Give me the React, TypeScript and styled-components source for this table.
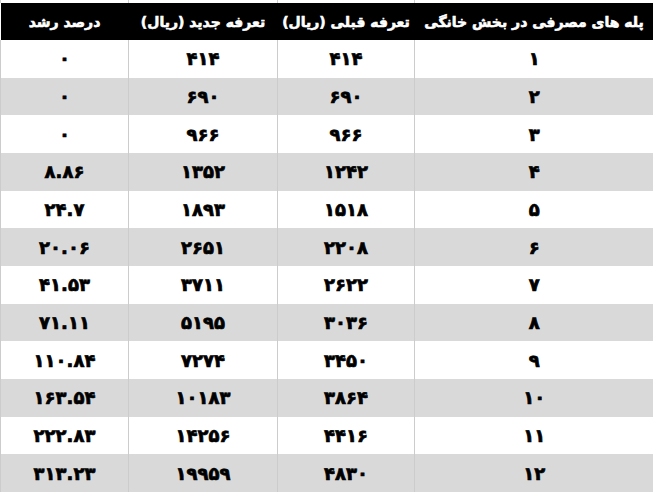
import React from "react";
import styled, { createGlobalStyle } from "styled-components";

const GlobalStyle = createGlobalStyle`
    html, body {
        margin: 0;
        padding: 0;
        background: #ffffff;
    }
    body {
        font-family: "DejaVu Sans", "Noto Sans", sans-serif;
    }
`;

const Table = styled.table`
    width: 653px;
    border-collapse: collapse;
    table-layout: fixed;
    direction: rtl;
    font-family: "DejaVu Sans", "Noto Sans", sans-serif;
    font-weight: bold;
`;

const Strip = styled.tr`
    height: 3px;
    background: #ffffff;
`;

const StripCell = styled.td`
    padding: 0;
    border-left: 1px solid #cfcfcf;
`;

const HeadRow = styled.tr`
    height: 37px;
    background: #000000;
`;

// the original face is a heavy display font, so thicken DejaVu with a stroke
const HeadCell = styled.th`
    padding: 0;
    color: #ffffff;
    font-size: 14px;
    font-weight: bold;
    text-align: center;
    white-space: nowrap;
    overflow: hidden;
    -webkit-text-stroke: 0.6px #ffffff;
`;

const Row = styled.tr<{ $shaded: boolean }>`
    height: 37.67px;
    background: ${(p) => (p.$shaded ? "#d9d9d9" : "#ffffff")};
`;

const Cell = styled.td`
    padding: 0;
    color: #000000;
    font-size: 18px;
    text-align: center;
    border-left: 1px solid #cccccc;
    -webkit-text-stroke: 0.7px #000000;
`;

const widths = [239, 137, 149, 128];

const headers = [
    "پله های مصرفی در بخش خانگی",
    "تعرفه قبلی (ریال)",
    "تعرفه جدید (ریال)",
    "درصد رشد",
];

const rows: string[][] = [
    ["۱", "۴۱۴", "۴۱۴", "۰"],
    ["۲", "۶۹۰", "۶۹۰", "۰"],
    ["۳", "۹۶۶", "۹۶۶", "۰"],
    ["۴", "۱۲۴۲", "۱۳۵۲", "۸.۸۶"],
    ["۵", "۱۵۱۸", "۱۸۹۳", "۲۴.۷"],
    ["۶", "۲۲۰۸", "۲۶۵۱", "۲۰.۰۶"],
    ["۷", "۲۶۲۲", "۳۷۱۱", "۴۱.۵۳"],
    ["۸", "۳۰۳۶", "۵۱۹۵", "۷۱.۱۱"],
    ["۹", "۳۴۵۰", "۷۲۷۴", "۱۱۰.۸۴"],
    ["۱۰", "۳۸۶۴", "۱۰۱۸۳", "۱۶۳.۵۴"],
    ["۱۱", "۴۴۱۶", "۱۴۲۵۶", "۲۲۲.۸۳"],
    ["۱۲", "۴۸۳۰", "۱۹۹۵۹", "۳۱۳.۲۳"],
];

export default function App() {
    return (
        <>
            <GlobalStyle />
            <Table>
                <colgroup>
                    {widths.map((w, i) => (
                        <col key={i} style={{ width: w }} />
                    ))}
                </colgroup>
                <tbody>
                    <Strip>
                        {widths.map((_, i) => (
                            <StripCell key={i} />
                        ))}
                    </Strip>
                    <HeadRow>
                        {headers.map((h) => (
                            <HeadCell key={h}>{h}</HeadCell>
                        ))}
                    </HeadRow>
                    {rows.map((r, i) => (
                        <Row key={i} $shaded={i % 2 === 1}>
                            {r.map((v, j) => (
                                <Cell key={j}>{v}</Cell>
                            ))}
                        </Row>
                    ))}
                </tbody>
            </Table>
        </>
    );
}
